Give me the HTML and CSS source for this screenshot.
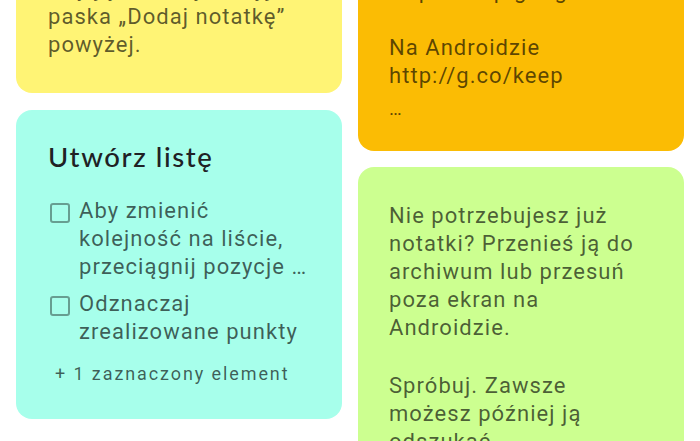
FILE: index.html
```html
<!DOCTYPE html>
<html lang="pl">
<head>
<meta charset="utf-8">
<title>Keep</title>
<link rel="stylesheet" href="styles.css">
</head>
<body>
<div class="board">
  <div class="col col-left">
    <div class="card yellow">
      <p class="body">Aby ją utworzyć, użyj<br>paska „Dodaj notatkę”<br>powyżej.</p>
    </div>
    <div class="card teal">
      <div class="title">Utwórz listę</div>
      <ul class="list">
        <li class="item"><span class="box"></span><span class="item-text">Aby zmienić kolejność na liście, przeciągnij pozycje …</span></li>
        <li class="item"><span class="box"></span><span class="item-text">Odznaczaj zrealizowane punkty</span></li>
      </ul>
      <div class="more">+ 1 zaznaczony element</div>
    </div>
  </div>
  <div class="col col-right">
    <div class="card orange">
      <p class="body">http://keep.google.com</p>
      <p class="body para">Na Androidzie<br>http://g.co/keep</p>
      <div class="ellipsis">…</div>
    </div>
    <div class="card green">
      <p class="body">Nie potrzebujesz już notatki? Przenieś ją do archiwum lub przesuń poza ekran na Androidzie.</p>
      <p class="body para">Spróbuj. Zawsze możesz później ją odszukać.</p>
    </div>
  </div>
</div>
</body>
</html>
```
FILE: styles.css
```css
html, body {
  margin: 0;
  padding: 0;
  background: #ffffff;
  overflow: hidden;
}
body {
  width: 700px;
  height: 441px;
  font-family: Roboto, "Noto Sans", sans-serif;
}
.board {
  display: flex;
  gap: 16px;
  padding: 0 16px;
  align-items: flex-start;
}
.col {
  flex: 1 1 0;
  display: flex;
  flex-direction: column;
  gap: 16px;
  min-width: 0;
}
.col-left { margin-top: -59px; gap: 17px; }
.col-right { margin-top: -57px; }
.card {
  border-radius: 16px;
  padding: 34px 31px 34px 32px;
}
.yellow { background: #fff475; }
.orange { background: #fbbc04; padding-left: 31px; padding-bottom: 30px; }
.teal { background: #a7ffeb; padding-top: 30px; padding-bottom: 33px; }
.green { background: #ccff90; padding-left: 31px; padding-top: 35px; }
.body {
  margin: 0;
  font-size: 22px;
  line-height: 28px;
  letter-spacing: 1.05px;
  color: rgba(0, 0, 0, 0.64);
}
.orange .para { margin-top: 29px; }
.green .para { margin-top: 30px; }
.ellipsis {
  font-size: 19px;
  line-height: 24px;
  color: rgba(0, 0, 0, 0.64);
  margin-top: 7px;
}
.title {
  font-family: Lato, "Open Sans", sans-serif;
  font-weight: 500;
  font-size: 27.5px;
  line-height: 34px;
  letter-spacing: 1.6px;
  color: #202124;
  margin-bottom: 23px;
}
.list {
  list-style: none;
  margin: 0;
  padding: 0;
  display: flex;
  flex-direction: column;
  gap: 9px;
}
.item {
  display: flex;
  gap: 9px;
  align-items: flex-start;
  padding-left: 2px;
}
.box {
  flex: none;
  width: 16px;
  height: 16px;
  border: 2px solid rgba(0, 0, 0, 0.38);
  border-radius: 3px;
  margin-top: 6px;
}
.item-text {
  font-size: 22px;
  line-height: 28px;
  letter-spacing: 1.05px;
  color: rgba(0, 0, 0, 0.64);
}
.more {
  margin-top: 16px;
  padding-left: 7px;
  font-size: 18px;
  line-height: 24px;
  letter-spacing: 1.9px;
  color: rgba(0, 0, 0, 0.64);
}
```
